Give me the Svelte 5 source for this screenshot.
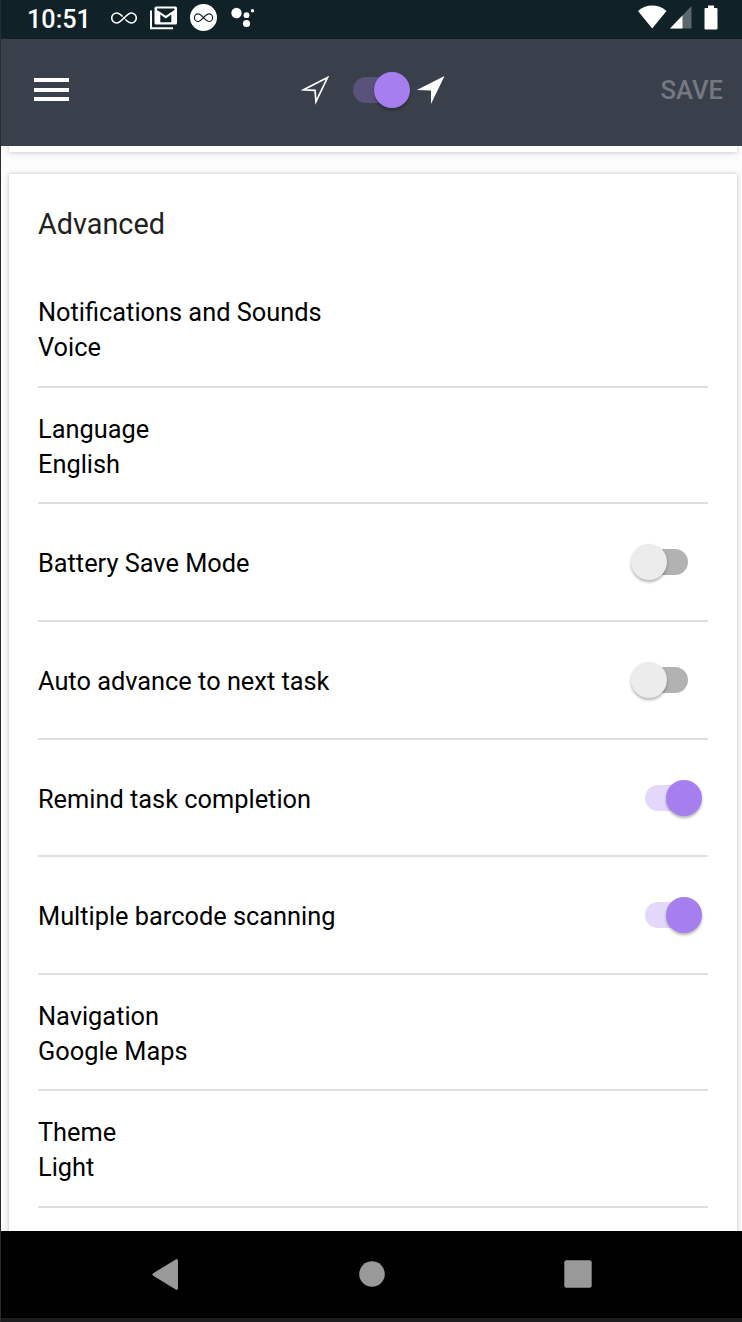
<script>
  let tracking = true

  let settings = [
    { label: 'Notifications and Sounds', value: 'Voice', height: 116 },
    { label: 'Language', value: 'English', height: 116 },
    { label: 'Battery Save Mode', on: false, height: 118 },
    { label: 'Auto advance to next task', on: false, height: 118 },
    { label: 'Remind task completion', on: true, height: 117 },
    { label: 'Multiple barcode scanning', on: true, height: 118 },
    { label: 'Navigation', value: 'Google Maps', height: 116 },
    { label: 'Theme', value: 'Light', height: 117 }
  ]

  const toggleTracking = () => (tracking = !tracking)
  const toggleSetting = (index) => {
    settings[index].on = !settings[index].on
  }
</script>

<div class="phone">
  <div class="status">
    <span class="time">10:51</span>
    <svg class="infinity" width="26" height="14" viewBox="0 0 26 14">
      <path d="M14.500 8.500C17 11 18.300 12 20.300 12a4.800 4.800 0 0 0 0-10C15.500 2 10.500 12 5.700 12a4.800 4.800 0 0 1 0-10C8 2 9.500 3.500 11.500 5.500" />
      <path class="thin" d="M11.500 5.500l3 3" />
    </svg>
    <svg class="mail" width="28" height="24" viewBox="0 0 28 24">
      <path class="line" d="M1 4.500v17.800h22" />
      <rect x="4.500" y="0.500" width="22.500" height="18" rx="1.500" />
      <path class="cut" d="M7 2.500h17.500v1.500L15.800 9.800L7 4z" />
      <path class="cut" d="M10.300 8.500L15.800 12.500l5.500-4v7.700H10.300z" />
    </svg>
    <svg class="badge" width="27" height="27" viewBox="0 0 27 27">
      <circle cx="13.500" cy="13.500" r="13.500" />
      <path
        d="M14.500 14.600C16.200 16.400 17.300 17.500 18.800 17.500a3.800 3.800 0 0 0 0-7.600C15.200 9.900 11.800 17.500 8.200 17.500a3.800 3.800 0 0 1 0-7.600C10 9.900 11 11 12.500 12.600l2 2"
      />
    </svg>
    <svg class="assistant" width="24" height="22" viewBox="0 0 24 22">
      <circle cx="5.500" cy="6" r="5.200" />
      <circle cx="15.500" cy="8.200" r="2.900" />
      <circle cx="15.500" cy="16.500" r="3.600" />
      <circle cx="21.500" cy="3.700" r="1.700" />
    </svg>
    <div class="signals">
      <svg width="30" height="24" viewBox="0 0 30 24">
        <path d="M0 6C8.500-1.300 20-1.300 28.500 6L14.200 23.500z" />
      </svg>
      <svg width="23" height="24" viewBox="0 0 23 24">
        <path d="M21.500 1v22.500H0z" opacity=".32" />
        <path d="M12.500 10.500V23.500H0z" />
      </svg>
      <svg class="battery" width="14" height="25" viewBox="0 0 14 25">
        <path d="M4 0.500h6v2.500h2.500q1 0 1 1v19.500q0 1-1 1h-11q-1 0-1-1V4q0-1 1-1H4z" />
      </svg>
    </div>
  </div>

  <header>
    <button class="menu" aria-label="Menu">
      <span></span>
      <span></span>
      <span></span>
    </button>
    <div class="tracking">
      <svg width="29" height="29" viewBox="0 0 29 29">
        <path class="arrow" d="M2.500 13.800L26.500 1.500L15 25.500L14 14.300z" />
      </svg>
      <button
        class="toggle dark"
        class:on={tracking}
        aria-label="Tracking"
        on:click={toggleTracking}
      ></button>
      <svg width="29" height="29" viewBox="0 0 29 29">
        <path d="M0.800 14L28.500 0L15 28V14.500z" />
      </svg>
    </div>
    <button class="save">SAVE</button>
  </header>

  <main>
    <section class="card previous"></section>
    <section class="card advanced">
      <h2>Advanced</h2>
      {#each settings as item, index}
        <div class="row" style="height: {item.height}px">
          <div class="text">
            <div>{item.label}</div>
            {#if item.value}
              <div>{item.value}</div>
            {/if}
          </div>
          {#if !item.value}
            <button
              class="toggle"
              class:on={item.on}
              aria-label={item.label}
              on:click={() => toggleSetting(index)}
            ></button>
          {/if}
        </div>
      {/each}
    </section>
  </main>

  <nav>
    <svg width="27" height="31" viewBox="0 0 27 31">
      <path d="M24.500 1.700V29.300L2 15.500z" stroke="#999" stroke-width="3" stroke-linejoin="round" />
    </svg>
    <svg width="26" height="26" viewBox="0 0 26 26">
      <circle cx="13" cy="13" r="12.800" />
    </svg>
    <svg width="28" height="28" viewBox="0 0 28 28">
      <rect x="0.300" y="0.300" width="27.400" height="27.400" rx="2" />
    </svg>
  </nav>
</div>

<style>
  :global(body) {
    margin: 0;
    background: #1d1c1e;
  }

  .phone {
    box-sizing: border-box;
    display: flex;
    flex-direction: column;
    width: 742px;
    height: 1322px;
    padding-bottom: 4px;
    border-left: 1px solid #2b2a2c;
    overflow: hidden;
    font-family: Roboto, sans-serif;
  }

  button {
    padding: 0;
    border: none;
    background: none;
    font: inherit;
    cursor: pointer;
  }

  svg {
    display: block;
    flex: none;
    fill: white;
  }

  .status {
    box-sizing: border-box;
    display: flex;
    flex: none;
    align-items: center;
    height: 39px;
    padding: 0 23px 4px 26px;
    background: #102127;
    color: white;
  }

  .time {
    width: 84px;
    padding-top: 4px;
    font-size: 25.2px;
    font-weight: 500;
    line-height: 30px;
  }

  .infinity path {
    fill: none;
    stroke: white;
    stroke-width: 1.6;
  }

  .infinity .thin {
    stroke-width: 0.8;
  }

  .mail {
    margin-left: 13px;
  }

  .mail .line {
    fill: none;
    stroke: white;
    stroke-width: 2;
  }

  .mail .cut {
    fill: #102127;
  }

  .badge {
    margin-left: 12px;
  }

  .badge path {
    fill: none;
    stroke: #102127;
    stroke-width: 1.2;
  }

  .assistant {
    margin-left: 14px;
  }

  .signals {
    display: flex;
    gap: 2px;
    margin-left: auto;
  }

  .battery {
    margin-left: 9px;
    margin-right: 1px;
  }

  header {
    display: grid;
    grid-template-columns: 1fr auto 1fr;
    flex: none;
    align-items: center;
    box-sizing: border-box;
    height: 107px;
    padding: 0 19px 5px 33px;
    background: #393f4b;
  }

  .menu {
    display: flex;
    flex-direction: column;
    gap: 5.5px;
    width: 35px;
    padding-bottom: 1px;
  }

  .menu span {
    height: 4px;
    background: white;
  }

  .tracking {
    display: flex;
    align-items: center;
    margin-right: 12px;
  }

  .tracking .toggle {
    margin-left: 23px;
  }

  .arrow {
    fill: none;
    stroke: white;
    stroke-width: 1.7;
  }

  .save {
    justify-self: end;
    color: #747980;
    font-size: 25.6px;
    font-weight: 500;
  }

  main {
    flex: 1;
    min-height: 0;
    overflow: hidden;
    padding: 0 5px 0 8px;
    background: #fcfcfc;
  }

  .card {
    box-sizing: border-box;
    background: white;
    box-shadow:
      0 0 4px rgba(0, 0, 0, 0.2),
      0 2px 9px rgba(0, 0, 0, 0.07);
  }

  .previous {
    height: 6px;
    margin-bottom: 22px;
  }

  .advanced {
    height: 1100px;
    padding: 30px 29px 0;
  }

  h2 {
    height: 68px;
    margin: 0;
    color: #212121;
    font-size: 28.8px;
    font-weight: 400;
    line-height: 40px;
  }

  .row {
    box-sizing: border-box;
    display: flex;
    align-items: center;
    justify-content: space-between;
    border-bottom: 2px solid #e0e0e0;
    color: black;
    font-size: 25.35px;
    line-height: 35px;
  }

  .text {
    padding-top: 3px;
  }

  .row:nth-of-type(1) .text {
    padding-top: 1px;
  }

  .toggle {
    position: relative;
    flex: none;
    width: 57px;
    height: 36px;
    margin-right: 20px;
  }

  .toggle.on {
    margin-right: 6px;
  }

  .tracking .toggle,
  .tracking .toggle.on {
    margin-right: 6px;
  }

  .toggle::before,
  .toggle::after {
    content: '';
    position: absolute;
  }

  .toggle::before {
    top: 5px;
    right: 0;
    width: 48px;
    height: 26px;
    border-radius: 13px;
    background: #b2b2b2;
  }

  .toggle::after {
    top: 0;
    left: 0;
    width: 36px;
    height: 36px;
    border-radius: 50%;
    background: #ececec;
    box-shadow: 0 2px 3px rgba(0, 0, 0, 0.3);
  }

  .toggle.on::before {
    right: 9px;
    background: #e4d8fa;
  }

  .toggle.on::after {
    left: 21px;
    background: #a67eee;
  }

  .toggle.dark::before {
    background: #5b527c;
  }

  nav {
    display: flex;
    flex: none;
    align-items: center;
    justify-content: space-between;
    box-sizing: border-box;
    height: 87px;
    padding: 0 150px 1px 151px;
    background: black;
  }

  nav svg {
    fill: #999;
  }
</style>
